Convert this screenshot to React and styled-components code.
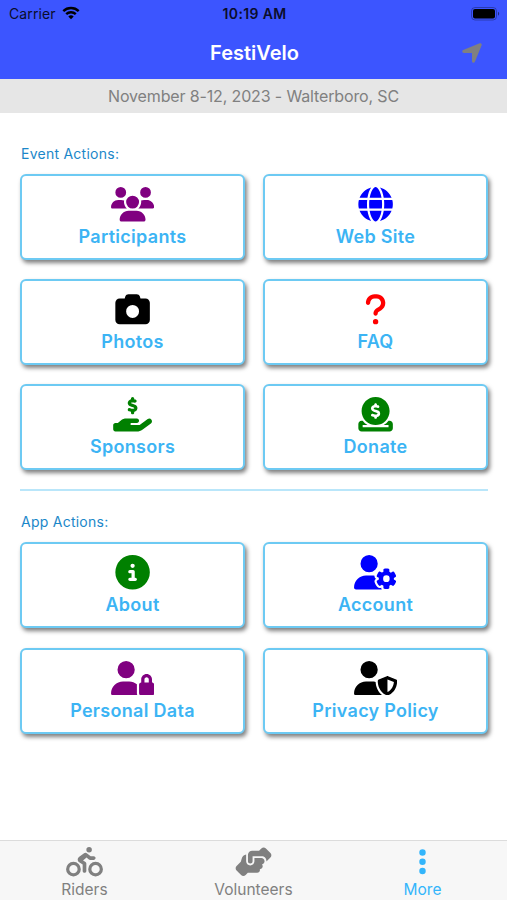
import styled, { createGlobalStyle } from 'styled-components'
import {
  FaCamera,
  FaCircleDollarToSlot,
  FaCircleInfo,
  FaEllipsisVertical,
  FaGlobe,
  FaHandHoldingDollar,
  FaHandshakeAngle,
  FaLocationArrow,
  FaPersonBiking,
  FaQuestion,
  FaUserGear,
  FaUserLock,
  FaUserShield,
  FaUsers
} from 'react-icons/fa6'

const eventActions = [
  { title: 'Participants', icon: FaUsers, color: 'purple' },
  { title: 'Web Site', icon: FaGlobe, color: 'blue' },
  { title: 'Photos', icon: FaCamera, color: 'black' },
  { title: 'FAQ', icon: FaQuestion, color: 'red' },
  { title: 'Sponsors', icon: FaHandHoldingDollar, color: 'green' },
  { title: 'Donate', icon: FaCircleDollarToSlot, color: 'green' }
]

const appActions = [
  { title: 'About', icon: FaCircleInfo, color: 'green' },
  { title: 'Account', icon: FaUserGear, color: 'blue' },
  { title: 'Personal Data', icon: FaUserLock, color: 'purple' },
  { title: 'Privacy Policy', icon: FaUserShield, color: 'black' }
]

const tabs = [
  { title: 'Riders', icon: FaPersonBiking },
  { title: 'Volunteers', icon: FaHandshakeAngle },
  { title: 'More', icon: FaEllipsisVertical, active: true }
]

const ActionGrid = ({ actions }) => (
  <Grid>
    {actions.map(({ title, icon: Icon, color }) => (
      <ActionButton key={title} $color={color}>
        <Icon />
        <ActionTitle>{title}</ActionTitle>
      </ActionButton>
    ))}
  </Grid>
)

const App = () => {
  return (
    <Screen>
      <GlobalStyle />
      <Header>
        <StatusBar>
          <Carrier>
            Carrier
            <Wifi viewBox='0 0 18 14'>
              <path d='M1.3 5.2a11 11 0 0 1 15.4 0M4.2 8.2a6.9 6.9 0 0 1 9.6 0' />
              <path d='M9 13.2 6.3 10.5a3.9 3.9 0 0 1 5.4 0z' className='dot' />
            </Wifi>
          </Carrier>
          <Time>10:19 AM</Time>
          <Battery viewBox='0 0 29 14'>
            <rect x='0.5' y='0.5' width='25' height='12.5' rx='3.5' fill='none' stroke='#000' strokeOpacity='0.3' />
            <rect x='2' y='2' width='22' height='9.5' rx='2' />
            <path d='M27 4.8c1.6.7 1.6 3.2 0 3.9z' fillOpacity='0.5' />
          </Battery>
        </StatusBar>
        <NavBar>
          <NavTitle>FestiVelo</NavTitle>
          <NavAction>
            <FaLocationArrow />
          </NavAction>
        </NavBar>
      </Header>
      <Banner>November 8-12, 2023 - Walterboro, SC</Banner>

      <Content>
        <SectionTitle>Event Actions:</SectionTitle>
        <ActionGrid actions={eventActions} />
        <Divider />
        <SectionTitle>App Actions:</SectionTitle>
        <ActionGrid actions={appActions} />
      </Content>

      {/* Bottom tabs */}
      <TabBar>
        {tabs.map(({ title, icon: Icon, active }) => (
          <Tab key={title} $active={active}>
            <Icon />
            <span>{title}</span>
          </Tab>
        ))}
      </TabBar>
    </Screen>
  )
}

export default App

const GlobalStyle = createGlobalStyle`
  * {
    box-sizing: border-box;
  }
  body {
    margin: 0;
    background: #fff;
    font-family: Inter, 'Liberation Sans', sans-serif;
  }
`
const Screen = styled.div`
  height: 900px;
  display: flex;
  flex-direction: column;
  overflow: hidden;
`
const Header = styled.header`
  height: 79px;
  flex: none;
  background: #3c55ff;
`
const StatusBar = styled.div`
  height: 27px;
  padding: 0 7px 0 9px;
  display: grid;
  grid-template-columns: 1fr auto 1fr;
  align-items: center;
  font-size: 14px;
  color: #0a0d2c;
`
const Carrier = styled.div`
  display: flex;
  align-items: center;
  gap: 6px;
  letter-spacing: 0.1px;
`
const Wifi = styled.svg`
  width: 18px;
  height: 14px;
  margin-top: -2px;
  fill: none;
  stroke: #000;
  stroke-width: 2.4;
  .dot {
    fill: #000;
    stroke: none;
  }
`
const Time = styled.div`
  font-weight: 600;
  letter-spacing: 0.35px;
`
const Battery = styled.svg`
  width: 29px;
  height: 14px;
  justify-self: end;
`
const NavBar = styled.div`
  height: 52px;
  padding: 0 23px 0 25px;
  display: grid;
  grid-template-columns: 1fr auto 1fr;
  align-items: center;
`
const NavTitle = styled.h1`
  grid-column: 2;
  margin: 0;
  font-size: 20px;
  font-weight: 600;
  color: #fff;
`
const NavAction = styled.div`
  display: flex;
  justify-content: flex-end;
  color: #808080;
  svg {
    height: 24px;
    width: 24px;
    margin-top: -1px;
  }
`
const Banner = styled.div`
  height: 34px;
  flex: none;
  display: flex;
  align-items: center;
  justify-content: center;
  background: #e6e6e6;
  color: #808080;
  font-size: 16px;
  letter-spacing: -0.14px;
`
const Content = styled.main`
  flex: 1;
  padding: 31px 19px 0 20px;
`
const SectionTitle = styled.h2`
  margin: 0 0 10px;
  padding-left: 1px;
  font-size: 14px;
  line-height: 20px;
  font-weight: 400;
  letter-spacing: 0.25px;
  color: #1b87c9;
`
const Grid = styled.div`
  display: grid;
  grid-template-columns: 1fr 1fr;
  gap: 19.2px 18px;
`
/* svg box is sized for the widest icon, narrower ones center inside it */
const ActionButton = styled.div`
  height: 86px;
  padding-top: 11px;
  display: flex;
  flex-direction: column;
  align-items: center;
  border: 2px solid #6dcaf3;
  border-radius: 6px;
  background: #fff;
  box-shadow: 2px 3px 4px rgba(0, 0, 0, 0.5);
  svg {
    height: 34.5px;
    width: 43.2px;
    flex: none;
    color: ${({ $color }) => $color};
  }
`
const ActionTitle = styled.div`
  margin-top: 3.5px;
  font-size: 18px;
  line-height: 24px;
  font-weight: 600;
  letter-spacing: 0.3px;
  color: #3cb4f4;
`
const Divider = styled.div`
  height: 2px;
  margin: 18.8px 0 21.3px;
  background: #b9e6fa;
`
const TabBar = styled.nav`
  height: 60px;
  flex: none;
  display: grid;
  grid-template-columns: repeat(3, 1fr);
  background: #f7f7f7;
  border-top: 1px solid #dcdcdc;
`
const Tab = styled.div`
  padding-top: 6px;
  display: flex;
  flex-direction: column;
  align-items: center;
  font-size: 15.5px;
  line-height: 20px;
  color: ${({ $active }) => ($active ? '#33b5fb' : '#808080')};
  svg {
    height: 29.5px;
    width: 37px;
    flex: none;
  }
  span {
    margin-top: 3px;
  }
`
